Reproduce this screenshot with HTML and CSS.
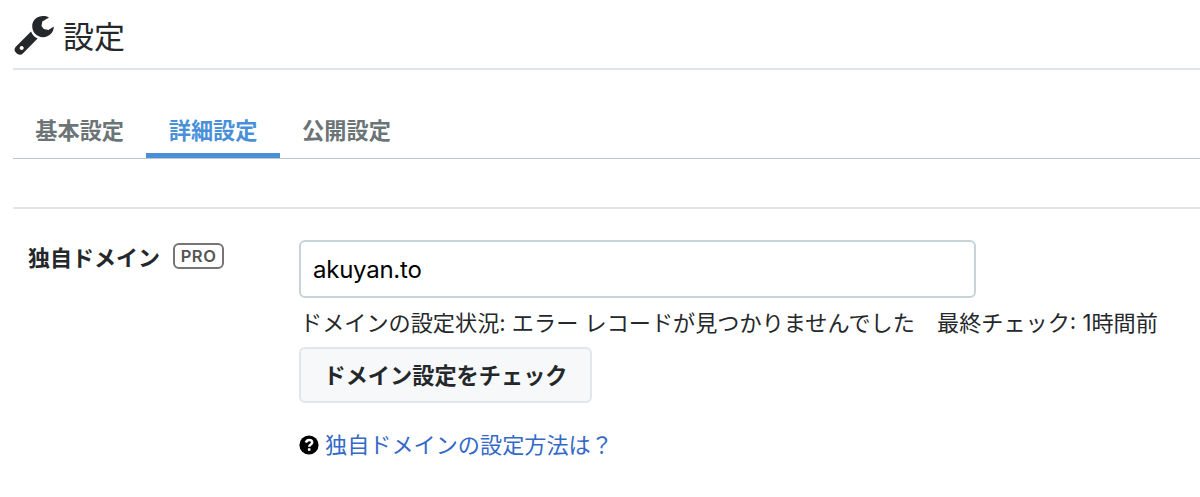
FILE: index.html
```
<!DOCTYPE html>
<html lang="ja">
<head>
  <meta charset="UTF-8">
  <meta name="viewport" content="width=device-width, initial-scale=1.0">
  <title>設定</title>
  <link rel="stylesheet" href="styles.css">
</head>
<body>
  <div class="container">
    <header class="page-header">
      <svg class="wrench" viewBox="0 0 40 41">
        <path fill-rule="evenodd" d="M17 16.6 C18.3 19.9 20.4 22.2 23.6 23.6 L9.1 38.3 C7 40.4 4.6 40.3 2.3 38.1 C-.1 35.8 .1 33.4 2 31.5 Z M7.7 31 a2 2 0 1 0 .01 0 Z"/>
        <path d="M35 2.6 C27.5 -1.4 18.2 3 18.2 11.3 C18.2 17.6 23 22.2 29 22.2 C35.2 22.2 39.8 17.5 39.8 11.6 L34.4 15 L29.8 14.1 L27.5 10.9 L28.3 6.4 Z"/>
      </svg>
      <h1>設定</h1>
    </header>

    <nav class="tabs">
      <a class="tab" href="#">基本設定</a>
      <a class="tab active" href="#">詳細設定</a>
      <a class="tab" href="#">公開設定</a>
    </nav>

    <div class="form-row">
      <div class="form-label">
        <label for="domain">独自ドメイン</label>
        <span class="badge">PRO</span>
      </div>
      <div class="form-body">
        <input id="domain" class="text-input" type="text" value="akuyan.to">
        <p class="status">ドメインの設定状況: エラー レコードが見つかりませんでした　最終チェック: 1時間前</p>
        <button class="button" type="button">ドメイン設定をチェック</button>
        <p class="help">
          <svg class="help-icon" viewBox="0 0 20 20">
            <circle cx="10" cy="10" r="9.6"/>
            <path d="M6.8 7.5 C7.6 5.4 9 4.9 10.2 4.9 C12.1 4.9 13.2 6 13.2 7.5 C13.2 9.5 10.2 9.5 10.2 11.7"/>
            <rect x="8.9" y="13.2" width="2.6" height="2.6" rx=".5"/>
          </svg>
          <a href="#">独自ドメインの設定方法は？</a>
        </p>
      </div>
    </div>
  </div>
</body>
</html>
```

FILE: styles.css
```
* {
  box-sizing: border-box;
}

body {
  margin: 0;
  background: #fff;
  color: #25282b;
  font-family: Inter, "Noto Sans CJK JP", sans-serif;
  font-size: 22px;
  overflow: hidden;
}

.container {
  padding-left: 13px;
}

.page-header {
  display: flex;
  height: 70px;
  padding: 15px 0 0 1px;
  border-bottom: 2px solid #e0e6e8;
}

.wrench {
  width: 40px;
  height: 41px;
  fill: #25282b;
}

h1 {
  margin: 0 0 0 9px;
  font-size: 31px;
  font-weight: 400;
  line-height: 44px;
}

.tabs {
  display: flex;
  height: 89px;
  padding-top: 34px;
  border-bottom: 1px solid #b9c9cc;
}

.tab {
  width: 133.4px;
  color: #6b7476;
  font-size: 22.2px;
  font-weight: 700;
  line-height: 53px;
  text-align: center;
  text-decoration: none;
}

.tab.active {
  color: #4a90d9;
  border-bottom: 5px solid #4a90d9;
}

.form-row {
  display: flex;
  margin-top: 48px;
  padding-top: 31px;
  border-top: 2px solid #e0e6e8;
}

.form-label {
  display: flex;
  align-items: center;
  width: 286px;
  height: 32px;
  padding-left: 15px;
  font-weight: 700;
}

.badge {
  width: 51px;
  height: 26px;
  margin-left: 13px;
  border: 2px solid #757575;
  border-radius: 6px;
  color: #555;
  font-size: 16.5px;
  font-weight: 600;
  letter-spacing: 0.5px;
  line-height: 23px;
  text-align: center;
}

.text-input {
  display: block;
  width: 677px;
  height: 58px;
  padding: 1px 12px 0;
  border: 2px solid #c6d4d8;
  border-radius: 6px;
  background: #fff;
  color: #000;
  font-family: inherit;
  font-size: 24px;
  letter-spacing: -0.25px;
}

.status {
  margin: 9px 0 0 1px;
  font-size: 22.15px;
  line-height: 32px;
  white-space: nowrap;
}

.button {
  display: block;
  width: 293px;
  height: 56px;
  margin-top: 8px;
  padding: 0 0 2px;
  border: 2px solid #e0e6e9;
  border-radius: 6px;
  background: #f6f8fa;
  color: #25282b;
  font-family: inherit;
  font-size: 22.2px;
  font-weight: 700;
}

.help {
  display: flex;
  align-items: center;
  margin: 26px 0 0;
  font-size: 22.15px;
  line-height: 32px;
}

.help-icon {
  width: 20px;
  height: 20px;
  margin-right: 6px;
}

.help-icon path {
  fill: none;
  stroke: #fff;
  stroke-width: 2.5;
}

.help-icon rect {
  fill: #fff;
}

.help a {
  color: #3469c7;
  text-decoration: none;
}
```
